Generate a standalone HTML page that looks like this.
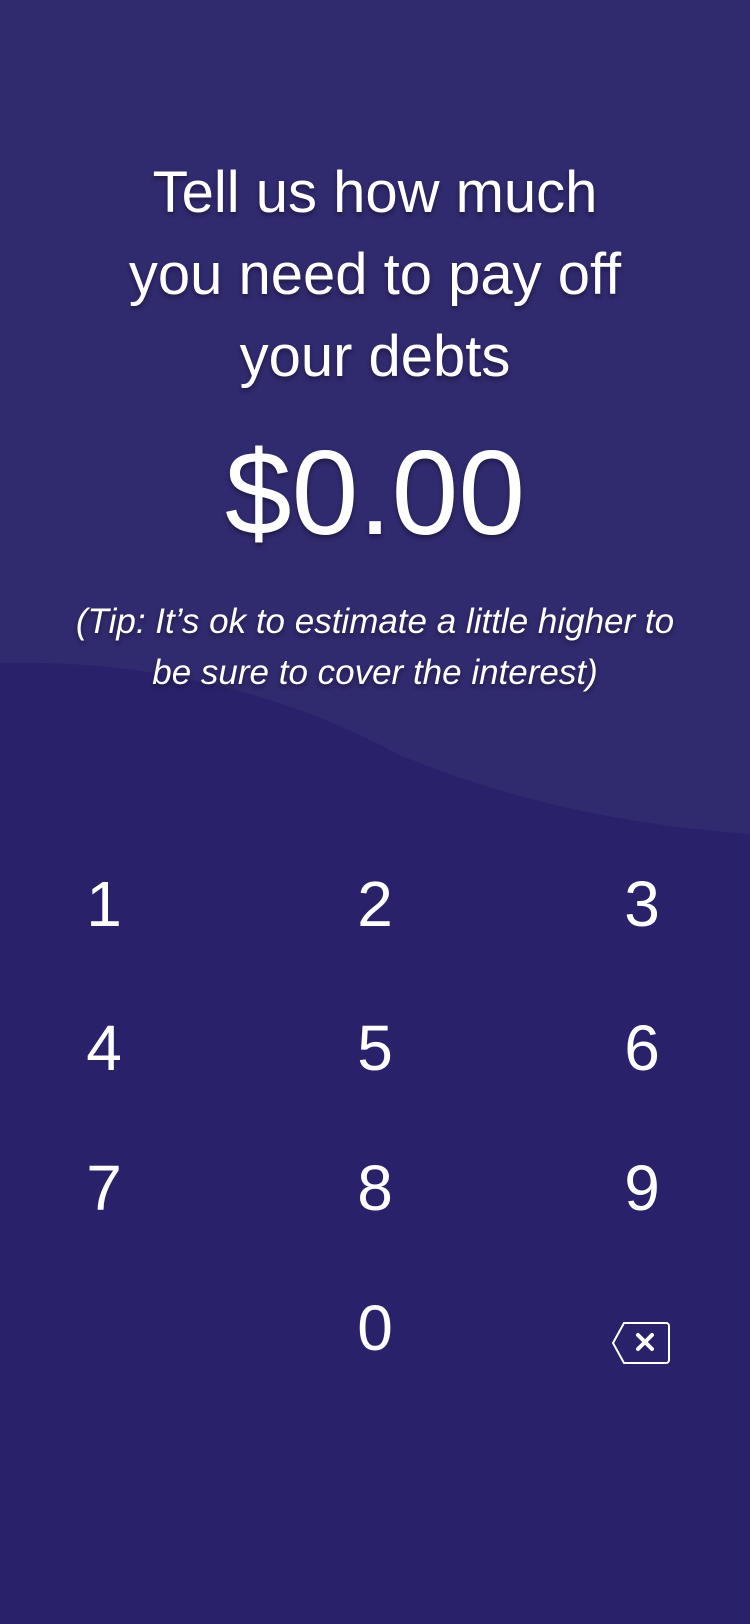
<!DOCTYPE html>
<html><head><meta charset="utf-8"><style>
html,body{margin:0;padding:0}
body{width:750px;height:1624px;background:#302a6e;position:relative;overflow:hidden;font-family:"Liberation Sans",sans-serif;color:#fff}
svg.bg{position:absolute;left:0;top:0}
.t{position:absolute;left:0;width:750px;text-align:center;text-shadow:0 3px 4px rgba(0,0,0,.35)}
.k{position:absolute;font-size:64px;width:120px;text-align:center;margin-left:-60px;line-height:1}
</style></head><body>
<svg class="bg" width="750" height="1624"><path d="M0 663 C120 660 260 680 400 755 C520 805 640 826 750 834 L750 1624 L0 1624 Z" fill="#29226a"/></svg>
<div class="t" style="top:152px;font-size:58px;line-height:82px">Tell us how much<br>you need to pay off<br>your debts</div>
<div class="t" style="top:428px;font-size:120px;line-height:130px">$0.00</div>
<div class="t" style="top:596px;font-size:35px;line-height:51px;font-style:italic">(Tip: It’s ok to estimate a little higher to<br>be sure to cover the interest)</div>
<div class="k" style="left:104px;top:872px">1</div>
<div class="k" style="left:375px;top:872px">2</div>
<div class="k" style="left:642px;top:872px">3</div>
<div class="k" style="left:104px;top:1016px">4</div>
<div class="k" style="left:375px;top:1016px">5</div>
<div class="k" style="left:642px;top:1016px">6</div>
<div class="k" style="left:104px;top:1156px">7</div>
<div class="k" style="left:375px;top:1156px">8</div>
<div class="k" style="left:642px;top:1156px">9</div>
<div class="k" style="left:375px;top:1296px">0</div>
<svg style="position:absolute;left:611px;top:1321px" width="60" height="44" viewBox="0 0 60 44"><path d="M13 2 H55 a3 3 0 0 1 3 3 V39 a3 3 0 0 1 -3 3 H13 L2 22 Z" fill="none" stroke="#fff" stroke-width="2"/><path d="M27 14 L41 28 M41 14 L27 28" stroke="#fff" stroke-width="4" stroke-linecap="round"/></svg>
</body></html>
